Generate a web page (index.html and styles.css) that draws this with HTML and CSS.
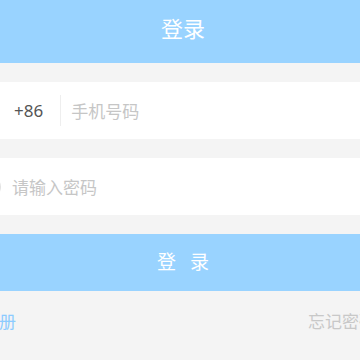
FILE: index.html
```html
<!DOCTYPE html>
<html lang="zh-CN">
<head>
    <meta charset="UTF-8">
    <title>登录</title>
    <meta name="viewport" content="width=device-width, initial-scale=1.0">
    <link rel="stylesheet" href="styles.css">
</head>
<body>
    <div class="page">
        <header class="header">登录</header>

        <form class="login-form">
            <div class="field phone-field">
                <span class="area-code">+86</span>
                <span class="divider"></span>
                <input type="tel" class="field-input" placeholder="手机号码">
            </div>
            <div class="field password-field">
                <svg class="lock-icon" width="23" height="23" viewBox="0 0 23 23">
                    <circle cx="11" cy="12" r="10" fill="none" stroke="#e2e2e2" stroke-width="2"/>
                    <circle cx="11" cy="12" r="2" fill="#e2e2e2"/>
                </svg>
                <input type="password" class="field-input" placeholder="请输入密码">
            </div>
            <button type="button" class="submit-btn">登录</button>
        </form>

        <div class="links">
            <a class="register-link">注册</a>
            <a class="forgot-link">忘记密码</a>
        </div>
    </div>
</body>
</html>
```

FILE: styles.css
```css
body {
    margin: 0;
    height: 360px;
    overflow: hidden;
    background-color: #f4f4f4;
    font-family: 'Noto Sans CJK SC', 'Noto Sans', sans-serif;
}

.page {
    width: 408px;
    margin-left: -21px;
}

.header {
    height: 63px;
    background-color: #99d3ff;
    color: #ffffff;
    font-size: 22px;
    display: flex;
    align-items: center;
    justify-content: center;
    padding-bottom: 9px;
    box-sizing: border-box;
}

.login-form {
    margin: 0;
    padding-top: 19px;
}

.field {
    height: 57px;
    background-color: #ffffff;
    display: flex;
    align-items: center;
    margin-bottom: 19px;
}

.phone-field {
    padding-left: 35px;
}

.area-code {
    font-family: 'Noto Sans', sans-serif;
    font-size: 17px;
    color: #555555;
    margin-right: 17px;
}

.divider {
    width: 1px;
    height: 31px;
    background-color: #eeeeee;
    margin-right: 10px;
}

.lock-icon {
    flex-shrink: 0;
    margin-right: 10px;
}

.field-input {
    flex: 1;
    border: none;
    outline: none;
    background: transparent;
    padding: 0;
    font-family: 'Noto Sans CJK SC', sans-serif;
    font-size: 17px;
    color: #333333;
}

.field-input::placeholder {
    color: #c6c6c6;
}

.submit-btn {
    display: block;
    width: 100%;
    height: 57px;
    border: none;
    margin: 0;
    padding: 0 0 4px;
    background-color: #99d3ff;
    color: #ffffff;
    font-family: 'Noto Sans CJK SC', sans-serif;
    font-size: 19px;
    letter-spacing: 14px;
    text-indent: 14px;
}

.links {
    display: flex;
    justify-content: space-between;
    padding: 19px 11px 0 3px;
    font-size: 17px;
    line-height: 22px;
}

.register-link {
    color: #8ccbff;
}

.forgot-link {
    color: #c8c8c8;
}
```
